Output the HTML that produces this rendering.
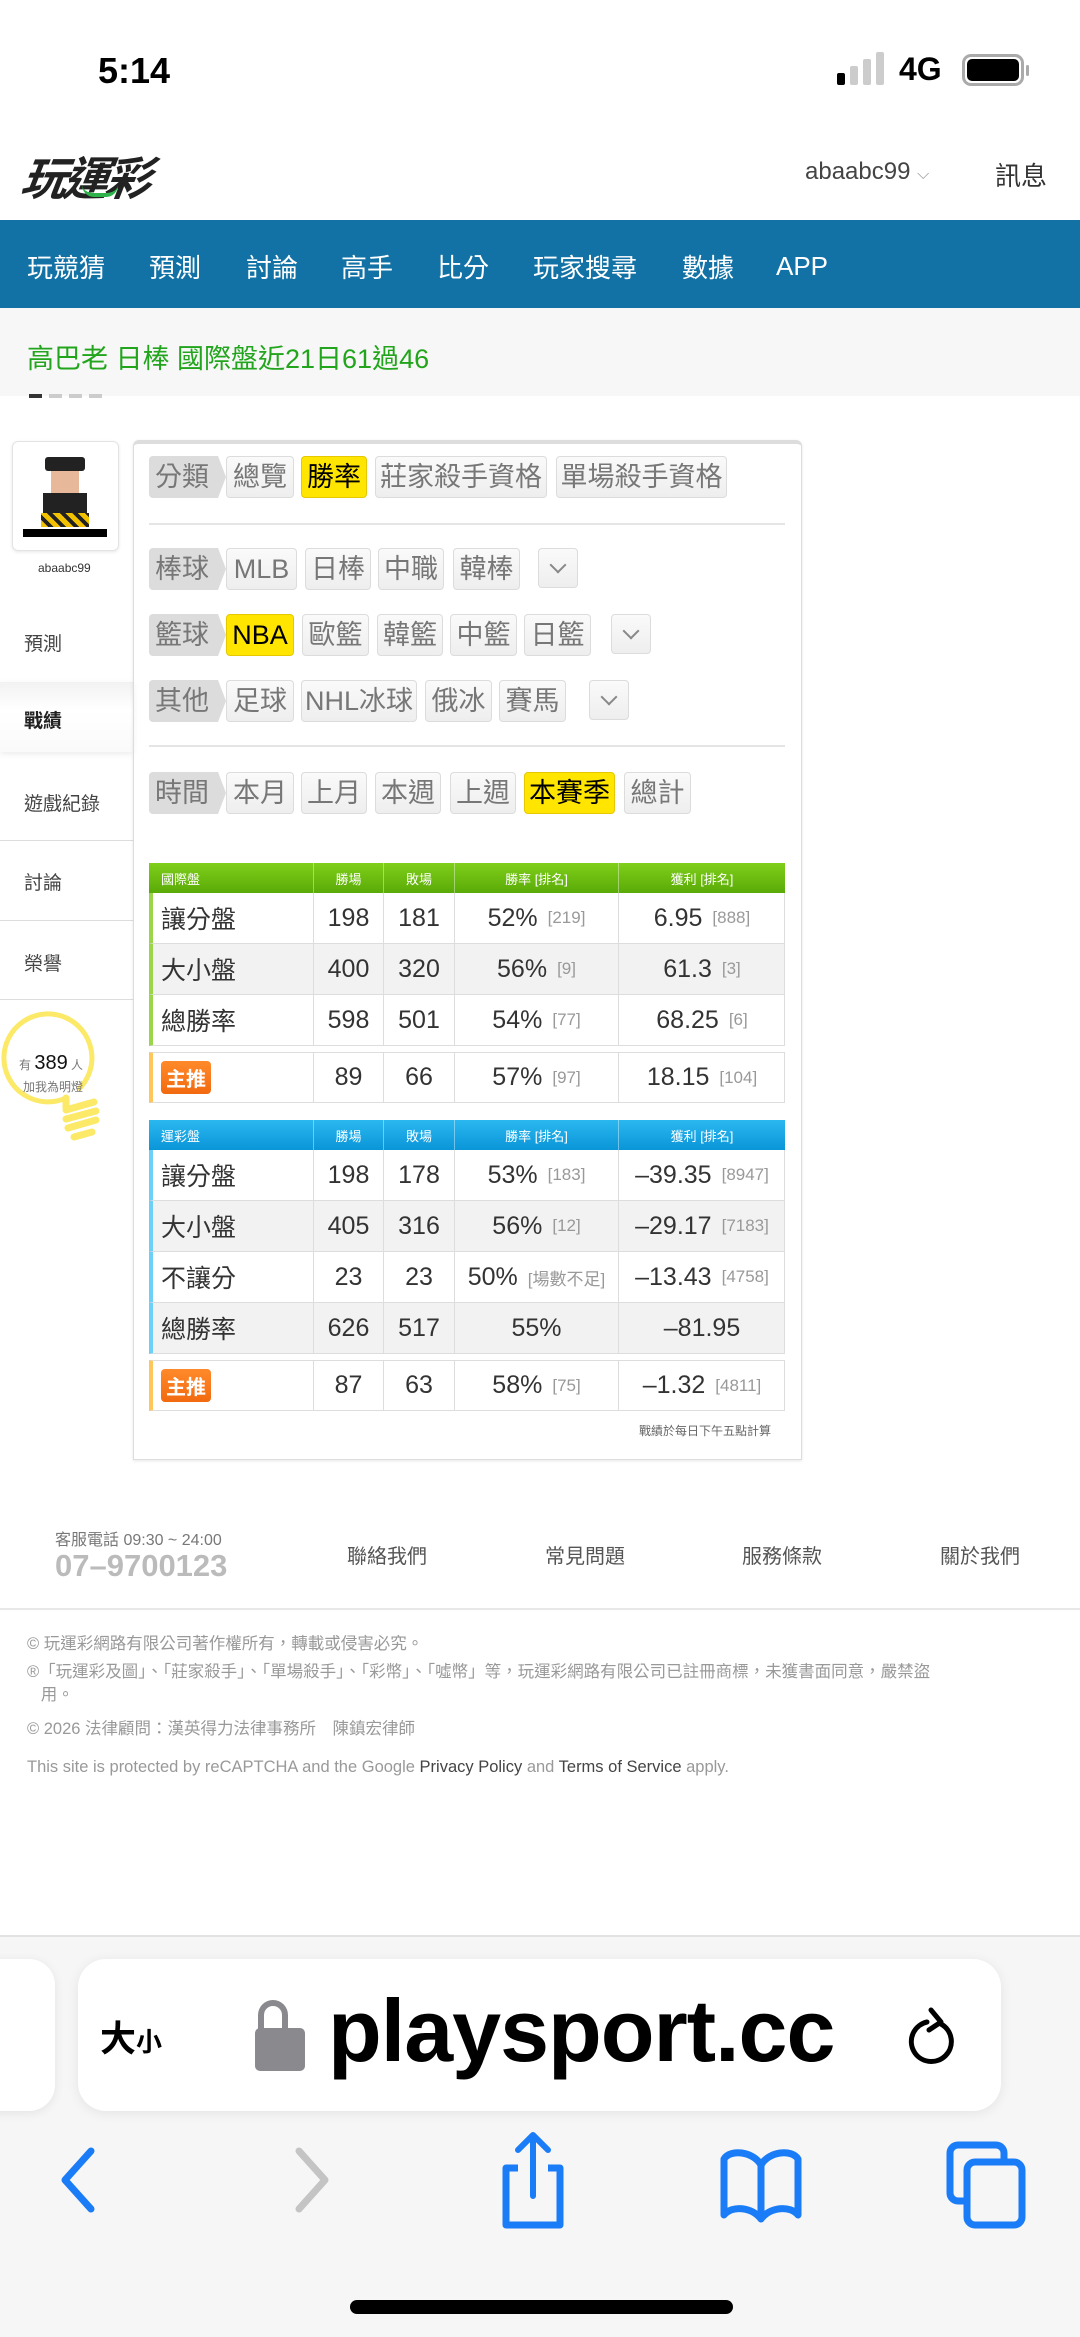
<!DOCTYPE html>
<html><head><meta charset="utf-8"><style>
*{margin:0;padding:0;box-sizing:border-box}
body{width:1080px;height:2337px;position:relative;background:#fff;font-family:"Liberation Sans","Noto Sans CJK TC",sans-serif;overflow:hidden;color:#333}
.a{position:absolute;white-space:nowrap}
.btn{position:absolute;height:42px;border:1px solid #dcdcdc;border-radius:4px;background:linear-gradient(#fafafa,#eee);color:#777;font-size:27px;line-height:40px;text-align:center}
.lab{position:absolute;height:42px;width:69px;left:149px;background:#dcdcdc;color:#777;font-size:27px;line-height:42px;padding-left:6px;border-radius:4px 0 0 4px}
.lab:after{content:"";position:absolute;right:-8px;top:0;border-left:8px solid #dcdcdc;border-top:21px solid transparent;border-bottom:21px solid transparent}
.on{background:#ffe500;border-color:#e5c800;color:#000}
.chev{position:absolute;height:40px;width:40px;border:1px solid #dcdcdc;border-radius:4px;background:linear-gradient(#fafafa,#eee)}
.chev:after{content:"";position:absolute;left:13px;top:10px;width:10px;height:10px;border-right:2px solid #888;border-bottom:2px solid #888;transform:rotate(45deg)}
.row{position:absolute;left:149px;width:636px;border-bottom:1px solid #ddd;border-right:1px solid #ddd}
.c{position:absolute;top:0;height:100%;display:flex;align-items:center;justify-content:center;font-size:25px;color:#333;border-left:1px solid #ddd}
.c small{font-size:17px;color:#999;margin-left:10px}
.hd .c{color:#fff;font-size:13px;border-left:1px solid rgba(255,255,255,.4)}
.zt{background:linear-gradient(#ff8a2a,#f26a10);color:#fff;font-size:20px;font-weight:bold;padding:2px 5px;border-radius:4px}
.side{position:absolute;left:24px;font-size:19px;color:#444}
.hl{position:absolute;left:0;width:133px;height:1px;background:#ddd}
.nav{position:absolute;top:248px;color:#fff;font-size:26px}
.ft{position:absolute;left:27px;font-size:16.5px;color:#999}
</style></head><body>
<!-- status bar -->
<div class="a" style="left:98px;top:50px;font-size:36px;font-weight:bold;color:#000">5:14</div>
<div class="a" style="left:837px;top:73px;width:8px;height:12px;background:#000;border-radius:2px"></div>
<div class="a" style="left:850px;top:66px;width:8px;height:19px;background:#ccc;border-radius:2px"></div>
<div class="a" style="left:863px;top:59px;width:8px;height:26px;background:#ccc;border-radius:2px"></div>
<div class="a" style="left:876px;top:52px;width:8px;height:33px;background:#ccc;border-radius:2px"></div>
<div class="a" style="left:899px;top:51px;font-size:32px;font-weight:bold;color:#000">4G</div>
<div class="a" style="left:962px;top:54px;width:62px;height:32px;border:3px solid #aaa;border-radius:9px"></div>
<div class="a" style="left:967px;top:59px;width:52px;height:22px;background:#000;border-radius:5px"></div>
<div class="a" style="left:1026px;top:65px;width:3px;height:11px;background:#aaa;border-radius:2px"></div>
<!-- header -->
<div class="a" style="left:22px;top:143px;font-size:46px;font-weight:bold;font-style:italic;color:#222;letter-spacing:-4px;transform:skewX(-8deg)">玩運彩</div>
<div class="a" style="left:82px;top:185px;width:36px;height:12px;border-bottom:4px solid #2db34a;border-radius:0 0 20px 20px"></div>
<div class="a" style="left:805px;top:158px;font-size:24px;color:#444">abaabc99 <span style="font-size:16px;color:#999">⌵</span></div>
<div class="a" style="left:995px;top:156px;font-size:26px;color:#333">訊息</div>
<!-- nav -->
<div class="a" style="left:0;top:220px;width:1080px;height:88px;background:#1372a5"></div>
<div class="nav" style="left:27px">玩競猜</div><div class="nav" style="left:149px">預測</div><div class="nav" style="left:246px">討論</div><div class="nav" style="left:341px">高手</div><div class="nav" style="left:437px">比分</div><div class="nav" style="left:533px">玩家搜尋</div><div class="nav" style="left:682px">數據</div><div class="nav" style="left:776px;top:251px">APP</div>
<!-- ticker -->
<div class="a" style="left:0;top:308px;width:1080px;height:88px;background:#f7f7f7"></div>
<div class="a" style="left:27px;top:337px;font-size:27px;color:#22a51c">高巴老 日棒 國際盤近21日61過46</div>
<div class="a" style="left:29px;top:394px;width:13px;height:4px;background:#333"></div>
<div class="a" style="left:49px;top:394px;width:13px;height:4px;background:#ccc"></div>
<div class="a" style="left:69px;top:394px;width:13px;height:4px;background:#ccc"></div>
<div class="a" style="left:89px;top:394px;width:13px;height:4px;background:#ccc"></div>
<!-- sidebar -->
<div class="a" style="left:12px;top:441px;width:107px;height:110px;border:1px solid #e3e3e3;border-radius:6px;box-shadow:0 1px 3px rgba(0,0,0,.1)"></div>
<div class="a" style="left:23px;top:455px;width:84px;height:82px;background:#fff;border-bottom:8px solid #000">
 <div class="a" style="left:22px;top:2px;width:40px;height:14px;background:#222;border-radius:3px"></div>
 <div class="a" style="left:28px;top:16px;width:28px;height:22px;background:#e8b89a"></div>
 <div class="a" style="left:20px;top:38px;width:44px;height:22px;background:#222"></div>
 <div class="a" style="left:18px;top:58px;width:48px;height:14px;background:repeating-linear-gradient(45deg,#f2c200 0 5px,#222 5px 9px)"></div>
</div>
<div class="a" style="left:38px;top:561px;font-size:12px;color:#333">abaabc99</div>
<div class="side" style="top:629px">預測</div>
<div class="a" style="left:0;top:682px;width:133px;height:70px;background:linear-gradient(#f2f2f2,#fff 40%,#fafafa);box-shadow:0 2px 6px rgba(0,0,0,.08)"></div>
<div class="side" style="top:706px;font-weight:bold;color:#222">戰績</div>
<div class="side" style="top:789px">遊戲紀錄</div>
<div class="hl" style="top:840px"></div>
<div class="side" style="top:868px">討論</div>
<div class="hl" style="top:920px"></div>
<div class="side" style="top:949px">榮譽</div>
<div class="hl" style="top:999px"></div>
<svg class="a" style="left:0;top:1000px" width="110" height="150" viewBox="0 0 110 150"><path d="M66 98 A44 44 0 1 1 78 90" fill="none" stroke="#fbe967" stroke-width="5"/><path d="M66 98 L66 108 M66 110 l28 -8 M66 119 l30 -8 M68 128 l28 -8 M74 137 l18 -5" stroke="#fbe967" stroke-width="7" stroke-linecap="round"/></svg>
<div class="a" style="left:19px;top:1052px;font-size:12px;color:#777">有 <b style="font-size:20px;color:#111;font-weight:normal">389</b> 人</div>
<div class="a" style="left:23px;top:1078px;font-size:12px;color:#777">加我為明燈</div>
<!-- panel -->
<div class="a" style="left:133px;top:440px;width:669px;height:1020px;border:1px solid #ddd;border-top:4px solid #ddd;border-radius:6px 6px 0 0;box-shadow:0 1px 3px rgba(0,0,0,.1)"></div>
<div class="lab" style="top:456px">分類</div>
<div class="btn" style="left:226px;top:456px;width:68px">總覽</div>
<div class="btn on" style="left:301px;top:456px;width:66px">勝率</div>
<div class="btn" style="left:375px;top:456px;width:172px">莊家殺手資格</div>
<div class="btn" style="left:556px;top:456px;width:171px">單場殺手資格</div>
<div class="a" style="left:149px;top:523px;width:636px;height:2px;background:#e5e5e5"></div>
<div class="lab" style="top:548px">棒球</div>
<div class="btn" style="left:226px;top:548px;width:71px">MLB</div>
<div class="btn" style="left:305px;top:548px;width:66px">日棒</div>
<div class="btn" style="left:378px;top:548px;width:66px">中職</div>
<div class="btn" style="left:453px;top:548px;width:67px">韓棒</div>
<div class="chev" style="left:538px;top:548px"></div>
<div class="lab" style="top:614px">籃球</div>
<div class="btn on" style="left:226px;top:614px;width:68px">NBA</div>
<div class="btn" style="left:302px;top:614px;width:67px">歐籃</div>
<div class="btn" style="left:377px;top:614px;width:66px">韓籃</div>
<div class="btn" style="left:450px;top:614px;width:67px">中籃</div>
<div class="btn" style="left:524px;top:614px;width:67px">日籃</div>
<div class="chev" style="left:611px;top:614px"></div>
<div class="lab" style="top:680px">其他</div>
<div class="btn" style="left:226px;top:680px;width:68px">足球</div>
<div class="btn" style="left:301px;top:680px;width:116px">NHL冰球</div>
<div class="btn" style="left:425px;top:680px;width:67px">俄冰</div>
<div class="btn" style="left:499px;top:680px;width:67px">賽馬</div>
<div class="chev" style="left:589px;top:680px"></div>
<div class="a" style="left:149px;top:745px;width:636px;height:2px;background:#e5e5e5"></div>
<div class="lab" style="top:772px">時間</div>
<div class="btn" style="left:226px;top:772px;width:68px">本月</div>
<div class="btn" style="left:301px;top:772px;width:66px">上月</div>
<div class="btn" style="left:375px;top:772px;width:66px">本週</div>
<div class="btn" style="left:450px;top:772px;width:66px">上週</div>
<div class="btn on" style="left:524px;top:772px;width:91px">本賽季</div>
<div class="btn" style="left:624px;top:772px;width:67px">總計</div>

<!-- table 1 -->
<div class="row hd" style="top:863px;height:30px;background:linear-gradient(#7fcf1a,#5aaa08);border:none"><div class="c" style="left:0;width:164px;justify-content:flex-start;padding-left:12px;border:none">國際盤</div><div class="c" style="left:164px;width:70px">勝場</div><div class="c" style="left:234px;width:71px">敗場</div><div class="c" style="left:305px;width:164px">勝率 [排名]</div><div class="c" style="left:469px;width:167px">獲利 [排名]</div></div>
<div class="row" style="top:893px;height:51px;border-left:4px solid #9bd54a"><div class="c" style="left:0;width:160px;justify-content:flex-start;padding-left:8px;border:none">讓分盤</div><div class="c" style="left:160px;width:70px">198</div><div class="c" style="left:230px;width:71px">181</div><div class="c" style="left:301px;width:164px">52%<small>[219]</small></div><div class="c" style="left:465px;width:167px">6.95<small>[888]</small></div></div>
<div class="row" style="top:944px;height:51px;border-left:4px solid #9bd54a;background:#f2f2f2"><div class="c" style="left:0;width:160px;justify-content:flex-start;padding-left:8px;border:none">大小盤</div><div class="c" style="left:160px;width:70px">400</div><div class="c" style="left:230px;width:71px">320</div><div class="c" style="left:301px;width:164px">56%<small>[9]</small></div><div class="c" style="left:465px;width:167px">61.3<small>[3]</small></div></div>
<div class="row" style="top:995px;height:51px;border-left:4px solid #9bd54a"><div class="c" style="left:0;width:160px;justify-content:flex-start;padding-left:8px;border:none">總勝率</div><div class="c" style="left:160px;width:70px">598</div><div class="c" style="left:230px;width:71px">501</div><div class="c" style="left:301px;width:164px">54%<small>[77]</small></div><div class="c" style="left:465px;width:167px">68.25<small>[6]</small></div></div>
<div class="row" style="top:1052px;height:51px;border-left:4px solid #ffc65c;border-top:1px solid #ddd"><div class="c" style="left:0;width:160px;justify-content:flex-start;padding-left:8px;border:none"><span class="zt">主推</span></div><div class="c" style="left:160px;width:70px">89</div><div class="c" style="left:230px;width:71px">66</div><div class="c" style="left:301px;width:164px">57%<small>[97]</small></div><div class="c" style="left:465px;width:167px">18.15<small>[104]</small></div></div>
<!-- table 2 -->
<div class="row hd" style="top:1120px;height:30px;background:linear-gradient(#2bb8f0,#0a95d8);border:none"><div class="c" style="left:0;width:164px;justify-content:flex-start;padding-left:12px;border:none">運彩盤</div><div class="c" style="left:164px;width:70px">勝場</div><div class="c" style="left:234px;width:71px">敗場</div><div class="c" style="left:305px;width:164px">勝率 [排名]</div><div class="c" style="left:469px;width:167px">獲利 [排名]</div></div>
<div class="row" style="top:1150px;height:51px;border-left:4px solid #6fd0f7"><div class="c" style="left:0;width:160px;justify-content:flex-start;padding-left:8px;border:none">讓分盤</div><div class="c" style="left:160px;width:70px">198</div><div class="c" style="left:230px;width:71px">178</div><div class="c" style="left:301px;width:164px">53%<small>[183]</small></div><div class="c" style="left:465px;width:167px">–39.35<small>[8947]</small></div></div>
<div class="row" style="top:1201px;height:51px;border-left:4px solid #6fd0f7;background:#f2f2f2"><div class="c" style="left:0;width:160px;justify-content:flex-start;padding-left:8px;border:none">大小盤</div><div class="c" style="left:160px;width:70px">405</div><div class="c" style="left:230px;width:71px">316</div><div class="c" style="left:301px;width:164px">56%<small>[12]</small></div><div class="c" style="left:465px;width:167px">–29.17<small>[7183]</small></div></div>
<div class="row" style="top:1252px;height:51px;border-left:4px solid #6fd0f7"><div class="c" style="left:0;width:160px;justify-content:flex-start;padding-left:8px;border:none">不讓分</div><div class="c" style="left:160px;width:70px">23</div><div class="c" style="left:230px;width:71px">23</div><div class="c" style="left:301px;width:164px">50%<small>[場數不足]</small></div><div class="c" style="left:465px;width:167px">–13.43<small>[4758]</small></div></div>
<div class="row" style="top:1303px;height:51px;border-left:4px solid #6fd0f7;background:#f2f2f2"><div class="c" style="left:0;width:160px;justify-content:flex-start;padding-left:8px;border:none">總勝率</div><div class="c" style="left:160px;width:70px">626</div><div class="c" style="left:230px;width:71px">517</div><div class="c" style="left:301px;width:164px">55%</div><div class="c" style="left:465px;width:167px">–81.95</div></div>
<div class="row" style="top:1360px;height:51px;border-left:4px solid #ffc65c;border-top:1px solid #ddd"><div class="c" style="left:0;width:160px;justify-content:flex-start;padding-left:8px;border:none"><span class="zt">主推</span></div><div class="c" style="left:160px;width:70px">87</div><div class="c" style="left:230px;width:71px">63</div><div class="c" style="left:301px;width:164px">58%<small>[75]</small></div><div class="c" style="left:465px;width:167px">–1.32<small>[4811]</small></div></div>
<div class="a" style="left:639px;top:1422px;font-size:12px;color:#666">戰績於每日下午五點計算</div>

<!-- footer -->
<div class="a" style="left:55px;top:1526px;font-size:16px;color:#777">客服電話 09:30 ~ 24:00</div>
<div class="a" style="left:55px;top:1548px;font-size:31px;font-weight:bold;color:#bbb">07–9700123</div>
<div class="a" style="left:347px;top:1540px;font-size:20px;color:#555">聯絡我們</div>
<div class="a" style="left:545px;top:1540px;font-size:20px;color:#555">常見問題</div>
<div class="a" style="left:742px;top:1540px;font-size:20px;color:#555">服務條款</div>
<div class="a" style="left:940px;top:1540px;font-size:20px;color:#555">關於我們</div>
<div class="a" style="left:0;top:1608px;width:1080px;height:2px;background:#e8e8e8"></div>
<div class="ft" style="top:1630px">© 玩運彩網路有限公司著作權所有，轉載或侵害必究。</div>
<div class="ft" style="top:1661px;line-height:23px">®「玩運彩及圖」、「莊家殺手」、「單場殺手」、「彩幣」、「噓幣」等，玩運彩網路有限公司已註冊商標，未獲書面同意，嚴禁盜<br>&nbsp;&nbsp;&nbsp;用。</div>
<div class="ft" style="top:1715px">© 2026 法律顧問：漢英得力法律事務所　陳鎮宏律師</div>
<div class="ft" style="top:1758px">This site is protected by reCAPTCHA and the Google <b style="color:#444;font-weight:normal">Privacy Policy</b> and <b style="color:#444;font-weight:normal">Terms of Service</b> apply.</div>

<!-- browser chrome -->
<div class="a" style="left:0;top:1935px;width:1080px;height:402px;background:#f6f6f6;border-top:2px solid #e2e2e2"></div>
<div class="a" style="left:-40px;top:1959px;width:95px;height:152px;background:#fff;border-radius:26px;box-shadow:0 2px 10px rgba(0,0,0,.08)"></div>
<div class="a" style="left:78px;top:1959px;width:923px;height:152px;background:#fff;border-radius:28px;box-shadow:0 2px 12px rgba(0,0,0,.08)"></div>
<div class="a" style="left:100px;top:2010px;font-size:36px;font-weight:bold;color:#000">大<span style="font-size:26px">小</span></div>
<div class="a" style="left:258px;top:2000px;width:30px;height:36px;border:6px solid #8a8a8e;border-bottom:none;border-radius:15px 15px 0 0"></div>
<div class="a" style="left:255px;top:2028px;width:50px;height:43px;background:#8a8a8e;border-radius:5px"></div>
<div class="a" style="left:328px;top:1980px;font-size:88px;font-weight:bold;color:#000;letter-spacing:-1px">playsport.cc</div>
<svg class="a" style="left:905px;top:2000px" width="60" height="70" viewBox="0 0 60 70"><path d="M22 22 A20 20 0 1 0 36 24" fill="none" stroke="#000" stroke-width="5" stroke-linecap="round"/><path d="M26 10 L36 22 L24 30" fill="none" stroke="#000" stroke-width="5" stroke-linecap="round" stroke-linejoin="round"/></svg>
<svg class="a" style="left:55px;top:2145px" width="45" height="70" viewBox="0 0 45 70"><path d="M36 6 L10 35 L36 64" fill="none" stroke="#1a7cf6" stroke-width="7" stroke-linecap="round" stroke-linejoin="round"/></svg>
<svg class="a" style="left:290px;top:2145px" width="45" height="70" viewBox="0 0 45 70"><path d="M9 6 L35 35 L9 64" fill="none" stroke="#c4c4c4" stroke-width="7" stroke-linecap="round" stroke-linejoin="round"/></svg>
<svg class="a" style="left:498px;top:2130px" width="72" height="100" viewBox="0 0 72 100"><path d="M20 38 H8 V95 H62 V38 H50" fill="none" stroke="#1a7cf6" stroke-width="7" stroke-linejoin="round"/><path d="M35 66 V6 M20 20 L35 5 L50 20" fill="none" stroke="#1a7cf6" stroke-width="6" stroke-linecap="round" stroke-linejoin="round"/></svg>
<svg class="a" style="left:718px;top:2145px" width="86" height="80" viewBox="0 0 86 80"><path d="M43 20 C35 6 12 4 6 14 V70 C14 60 34 62 43 74 C52 62 72 60 80 70 V14 C74 4 51 6 43 20 Z M43 20 V72" fill="none" stroke="#1a7cf6" stroke-width="7" stroke-linejoin="round"/></svg>
<svg class="a" style="left:945px;top:2140px" width="82" height="90" viewBox="0 0 82 90"><rect x="5" y="5" width="54" height="56" rx="8" fill="none" stroke="#1a7cf6" stroke-width="7"/><rect x="22" y="22" width="55" height="63" rx="8" fill="#f6f6f6" stroke="#1a7cf6" stroke-width="7"/></svg>
<div class="a" style="left:350px;top:2300px;width:383px;height:14px;background:#000;border-radius:7px"></div>
</body></html>
